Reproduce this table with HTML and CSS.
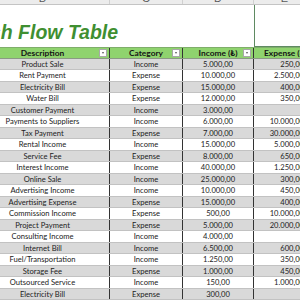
FILE: index.html
```html
<!DOCTYPE html>
<html>
<head>
<meta charset="utf-8">
<link rel="stylesheet" href="styles.css">
</head>
<body>
<div class="sheet">
  <div class="colhead">
    <div class="ch">B</div><div class="ch">C</div><div class="ch">D</div><div class="ch">E</div>
  </div>
  <div class="titlerow">
    <div class="title">Cash Flow Table</div>
    <div class="selcell"></div>
  </div>
  <div class="row head">
    <div class="hc"><span></span><span class="ht">Description</span><span class="dd"></span></div>
    <div class="hc"><span></span><span class="ht">Category</span><span class="dd"></span></div>
    <div class="hc"><span></span><span class="ht">Income (&#8378;)</span><span class="dd"></span></div>
    <div class="hc last"><span></span><span class="ht">Expense (&#8378;)</span><span></span></div>
  </div>
  <div class="row alt"><div class="c">Product Sale</div><div class="c">Income</div><div class="c">5.000,00</div><div class="c r">250,00</div></div>
  <div class="row"><div class="c">Rent Payment</div><div class="c">Expense</div><div class="c">10.000,00</div><div class="c r">2.500,00</div></div>
  <div class="row alt"><div class="c">Electricity Bill</div><div class="c">Expense</div><div class="c">15.000,00</div><div class="c r">400,00</div></div>
  <div class="row"><div class="c">Water Bill</div><div class="c">Expense</div><div class="c">12.000,00</div><div class="c r">350,00</div></div>
  <div class="row alt"><div class="c">Customer Payment</div><div class="c">Income</div><div class="c">3.000,00</div><div class="c r"></div></div>
  <div class="row"><div class="c">Payments to Suppliers</div><div class="c">Income</div><div class="c">6.000,00</div><div class="c r">10.000,00</div></div>
  <div class="row alt"><div class="c">Tax Payment</div><div class="c">Expense</div><div class="c">7.000,00</div><div class="c r">30.000,00</div></div>
  <div class="row"><div class="c">Rental Income</div><div class="c">Income</div><div class="c">15.000,00</div><div class="c r">5.000,00</div></div>
  <div class="row alt"><div class="c">Service Fee</div><div class="c">Expense</div><div class="c">8.000,00</div><div class="c r">650,00</div></div>
  <div class="row"><div class="c">Interest Income</div><div class="c">Income</div><div class="c">40.000,00</div><div class="c r">1.250,00</div></div>
  <div class="row alt"><div class="c">Online Sale</div><div class="c">Income</div><div class="c">25.000,00</div><div class="c r">300,00</div></div>
  <div class="row"><div class="c">Advertising Income</div><div class="c">Income</div><div class="c">10.000,00</div><div class="c r">450,00</div></div>
  <div class="row alt"><div class="c">Advertising Expense</div><div class="c">Expense</div><div class="c">15.000,00</div><div class="c r">400,00</div></div>
  <div class="row"><div class="c">Commission Income</div><div class="c">Expense</div><div class="c">500,00</div><div class="c r">10.000,00</div></div>
  <div class="row alt"><div class="c">Project Payment</div><div class="c">Expense</div><div class="c">5.000,00</div><div class="c r">20.000,00</div></div>
  <div class="row"><div class="c">Consulting Income</div><div class="c">Income</div><div class="c">4.000,00</div><div class="c r"></div></div>
  <div class="row alt"><div class="c">Internet Bill</div><div class="c">Income</div><div class="c">6.500,00</div><div class="c r">600,00</div></div>
  <div class="row"><div class="c">Fuel/Transportation</div><div class="c">Income</div><div class="c">1.250,00</div><div class="c r">350,00</div></div>
  <div class="row alt"><div class="c">Storage Fee</div><div class="c">Expense</div><div class="c">1.000,00</div><div class="c r">450,00</div></div>
  <div class="row"><div class="c">Outsourced Service</div><div class="c">Income</div><div class="c">150,00</div><div class="c r">1.000,00</div></div>
  <div class="row alt"><div class="c">Electricity Bill</div><div class="c">Expense</div><div class="c">300,00</div><div class="c r"></div></div>
</div>
</body>
</html>
```

FILE: styles.css
```css
html, body {
  margin: 0;
  padding: 0;
  width: 300px;
  height: 300px;
  overflow: hidden;
  background: #ffffff;
}

.sheet {
  margin-left: -24px;
  margin-top: -14px;
  width: 340px;
  font-family: "Lato", "Liberation Sans", sans-serif;
}

.colhead {
  display: grid;
  grid-template-columns: 134px 73px 71px 62px;
  height: 19px;
  box-sizing: border-box;
  background: #ececec;
  border-bottom: 1px solid #c4c4c4;
}

.ch {
  display: flex;
  align-items: flex-end;
  justify-content: center;
  font-family: "Liberation Sans", sans-serif;
  font-size: 11px;
  line-height: 11px;
  color: #5a5a5a;
  border-right: 1px solid #d0d0d0;
  box-sizing: border-box;
}

.titlerow {
  display: grid;
  grid-template-columns: 278px 62px;
  height: 42px;
}

.title {
  margin-left: -11px;
  padding-top: 17px;
  font-family: "Liberation Sans", sans-serif;
  font-weight: bold;
  font-style: italic;
  font-size: 19.5px;
  line-height: 20px;
  color: #3f8f31;
  white-space: nowrap;
}

.selcell {
  border-left: 1px solid #5f8a62;
  border-bottom: 1px solid #5f8a62;
}

.row {
  display: grid;
  grid-template-columns: 134px 73px 71px 62px;
  height: 11.5px;
  box-sizing: border-box;
  border-bottom: 1px solid #c2c2c2;
  background: #ffffff;
}

.row.alt {
  background: #d9d9d9;
}

.row.head {
  background: #8fd36e;
  border-top: 1px solid #7fae6a;
  border-bottom: 1px solid #8a9a84;
}

.hc {
  display: grid;
  grid-template-columns: 10px 1fr 10px;
  align-items: center;
  border-right: 1px solid #333333;
  box-sizing: border-box;
}

.hc.last {
  border-right: none;
}

.ht {
  text-align: center;
  font-weight: bold;
  font-size: 8.4px;
  line-height: 10px;
  color: #141414;
  white-space: nowrap;
}

.dd {
  width: 8px;
  height: 8px;
  box-sizing: border-box;
  background: #ffffff;
  border: 1px solid #a8a8a8;
  display: flex;
  align-items: center;
  justify-content: center;
}

.dd::after {
  content: "";
  width: 0;
  height: 0;
  border-left: 1.5px solid transparent;
  border-right: 1.5px solid transparent;
  border-top: 2px solid #555555;
}

.c {
  text-align: center;
  font-size: 7.6px;
  line-height: 10.5px;
  color: #222222;
  white-space: nowrap;
  border-right: 1px solid #333333;
  box-sizing: border-box;
  overflow: hidden;
}

.c.r {
  text-align: right;
  padding-right: 12px;
  border-right: none;
}
```
